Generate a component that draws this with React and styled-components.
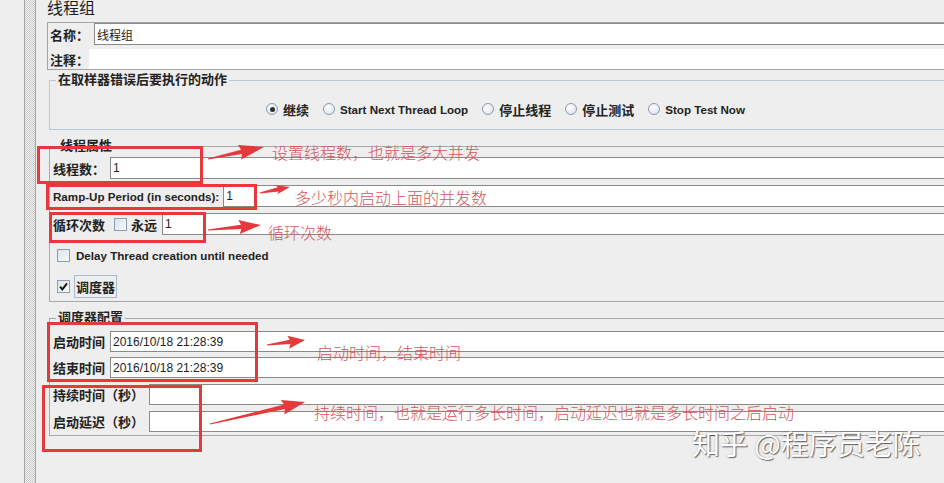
import React from "react";
import styled, { createGlobalStyle } from "styled-components";

const GlobalStyle = createGlobalStyle`
  html, body {
    margin: 0;
    padding: 0;
    background: #eeeeee;
  }
  body {
    font-family: "Liberation Sans", "Noto Sans CJK SC", sans-serif;
    color: #222;
    overflow: hidden;
  }
`;

const Page = styled.div`
  position: relative;
  display: flex;
  width: 944px;
  height: 483px;
  overflow: hidden;
  background: #eeeeee;
`;

const TreeEdge = styled.div`
  flex: none;
  width: 24px;
  border-right: 1px solid #a5a5a5;
`;

const Splitter = styled.div`
  flex: none;
  width: 10px;
  border-right: 1px solid #a5a5a5;
  background: repeating-conic-gradient(#cbcbcb 0 25%, #f3f3f3 0 50%) 0 0 / 2px 2px;
`;

const Main = styled.main`
  flex: none;
  width: 1000px;
  padding-left: 11px;
  display: flex;
  flex-direction: column;
`;

const Title = styled.h1`
  margin: -4px 0 4px;
  height: 22px;
  line-height: 22px;
  font-family: "Noto Sans CJK SC", sans-serif;
  font-size: 16px;
  font-weight: 400;
  color: #1e1e1e;
`;

const NameBox = styled.div`
  display: flex;
  flex-direction: column;
  gap: 4px;
  padding-left: 2px;
  border: 1px solid #a3a3a3;
  border-right: none;
`;

const Group = styled.fieldset`
  margin: ${(p) => p.$mt}px 0 0 2px;
  padding: 0 0 ${(p) => p.$pb}px 3px;
  border: 1px solid ${(p) => p.$tone};
  border-right: none;
  min-width: 0;
  display: flex;
  flex-direction: column;
`;

const Legend = styled.legend`
  margin-left: ${(p) => p.$ml}px;
  padding: 0 2px;
  height: 16px;
  line-height: 16px;
  font-size: 13px;
  font-weight: 700;
  color: #222;
`;

const Row = styled.div`
  display: flex;
  align-items: center;
  height: ${(p) => p.$h}px;
  margin-top: ${(p) => p.$mt || 0}px;
  gap: ${(p) => p.$gap ?? 5}px;
`;

const Label = styled.span`
  flex: none;
  width: ${(p) => (p.$w ? `${p.$w}px` : "auto")};
  font-size: ${(p) => (p.$en ? 11.6 : 13)}px;
  font-weight: 700;
  white-space: nowrap;
  color: #222;
`;

const Field = styled.div`
  flex: 1;
  align-self: stretch;
  display: flex;
  align-items: center;
  padding-left: 2px;
  background: #fff;
  border: 1px solid ${(p) => (p.$plain ? "#fff" : "#8a8a8a")};
  border-right: none;
  font-size: 12px;
  color: #222;
`;

const RadioRow = styled.div`
  display: flex;
  align-items: center;
  gap: 14px;
  height: 16px;
  margin-top: 13px;
  padding-left: 213px;
`;

const Choice = styled.label`
  display: flex;
  align-items: center;
  gap: 5px;
  font-size: ${(p) => (p.$en ? 11.6 : 13)}px;
  font-weight: 700;
  white-space: nowrap;
  color: #222;
`;

const RadioDot = styled.span`
  flex: none;
  width: 12px;
  height: 12px;
  box-sizing: border-box;
  border-radius: 50%;
  border: 1px solid #8b9bb0;
  background: radial-gradient(circle at 40% 35%, #ffffff 0, #e6eaef 65%, #cfd6df 100%);
  display: inline-flex;
  align-items: center;
  justify-content: center;

  &::after {
    content: "";
    width: 5px;
    height: 5px;
    border-radius: 50%;
    background: ${(p) => (p.$on ? "#2e2e2e" : "transparent")};
  }
`;

const CheckBox = styled.span`
  flex: none;
  width: 13px;
  height: 13px;
  box-sizing: border-box;
  border: 1px solid #8d9db2;
  background: linear-gradient(135deg, #dbe3ec, #f8fafc);
  display: inline-flex;
  align-items: center;
  justify-content: center;
`;

const CheckRow = styled.div`
  display: flex;
  align-items: center;
  gap: 4px;
  height: ${(p) => p.$h}px;
  margin-top: ${(p) => p.$mt}px;
  padding-left: 4px;
`;

const CheckText = styled.span`
  font-size: ${(p) => (p.$en ? 11.6 : 13)}px;
  font-weight: 700;
  white-space: nowrap;
  color: #222;
  padding: 1px 1px;
  border: 1px solid ${(p) => (p.$focus ? "#a9b9cc" : "transparent")};
`;

const Overlay = styled.div`
  position: absolute;
  inset: 0;
  pointer-events: none;
`;

const RedBox = styled.div`
  position: absolute;
  left: ${(p) => p.$x}px;
  top: ${(p) => p.$y}px;
  width: ${(p) => p.$w}px;
  height: ${(p) => p.$h}px;
  box-sizing: border-box;
  border: 3px solid #e6393c;
`;

const Note = styled.div`
  position: absolute;
  left: ${(p) => p.$x}px;
  top: ${(p) => p.$y - 10}px;
  height: 20px;
  line-height: 20px;
  font-family: "Noto Sans CJK SC", sans-serif;
  font-size: 16px;
  font-weight: 300;
  color: #d4555b;
  white-space: nowrap;
`;

const ArrowLayer = styled.svg`
  position: absolute;
  left: 0;
  top: 0;
`;

const Watermark = styled.div`
  position: absolute;
  left: 692px;
  top: 427px;
  height: 32px;
  line-height: 32px;
  font-family: "Noto Sans CJK SC", sans-serif;
  font-size: 28px;
  color: #ffffff;
  white-space: nowrap;
  text-shadow: 1px 1px 1px rgba(60, 60, 60, 0.75), 0 0 2px rgba(0, 0, 0, 0.25);
`;

const arrowPoints = ([x1, y1, x2, y2, head, wing]) => {
  const dx = x2 - x1;
  const dy = y2 - y1;
  const len = Math.hypot(dx, dy);
  const ux = dx / len;
  const uy = dy / len;
  const nx = -uy;
  const ny = ux;
  const bx = x2 - ux * head;
  const by = y2 - uy * head;
  const shaft = 2.2;
  return [
    [x1 + nx * 0.6, y1 + ny * 0.6],
    [bx + nx * shaft, by + ny * shaft],
    [bx + nx * wing - ux * 2, by + ny * wing - uy * 2],
    [x2, y2],
    [bx - nx * wing - ux * 2, by - ny * wing - uy * 2],
    [bx - nx * shaft, by - ny * shaft],
    [x1 - nx * 0.6, y1 - ny * 0.6],
  ]
    .map((p) => p.map((v) => v.toFixed(1)).join(","))
    .join(" ");
};

const arrows = [
  [208, 159, 264, 147, 23, 7.5],
  [260, 193, 290, 187, 12, 4.5],
  [208, 230, 261, 225, 20, 7],
  [267, 345, 305, 340, 15, 6.5],
  [210, 424, 305, 402, 21, 7.5],
];

const boxes = [
  { x: 37, y: 146, w: 166, h: 38 },
  { x: 46, y: 184, w: 211, h: 26 },
  { x: 49, y: 212, w: 157, h: 31 },
  { x: 47, y: 322, w: 211, h: 60 },
  { x: 42, y: 385, w: 160, h: 67 },
];

const notes = [
  { x: 272, y: 152, text: "设置线程数，也就是多大并发" },
  { x: 295, y: 197, text: "多少秒内启动上面的并发数" },
  { x: 268, y: 232, text: "循环次数" },
  { x: 317, y: 352, text: "启动时间，结束时间" },
  { x: 314, y: 412, text: "持续时间，也就是运行多长时间，启动延迟也就是多长时间之后启动" },
];

const radios = [
  { text: "继续", on: true },
  { text: "Start Next Thread Loop", en: true },
  { text: "停止线程" },
  { text: "停止测试" },
  { text: "Stop Test Now", en: true },
];

const Tick = () => (
  <svg width="9" height="9" viewBox="0 0 9 9">
    <path d="M1 4.6 L3.4 7.4 L8 1.4" fill="none" stroke="#151515" strokeWidth="1.9" />
  </svg>
);

const App = () => {
  return (
    <>
      <GlobalStyle />
      <Page>
        <TreeEdge />
        <Splitter />
        <Main>
          <Title>线程组</Title>

          <NameBox>
            <Row $h={22} $gap={0}>
              <Label $w={44}>名称：</Label>
              <Field>线程组</Field>
            </Row>
            <Row $h={20} $gap={0}>
              <Label $w={39}>注释：</Label>
              <Field $plain />
            </Row>
          </NameBox>

          <Group $mt={2} $pb={12} $tone="#b9c7d6">
            <Legend $ml={3}>在取样器错误后要执行的动作</Legend>
            <RadioRow>
              {radios.map((r) => (
                <Choice key={r.text} $en={r.en}>
                  <RadioDot $on={r.on} />
                  {r.text}
                </Choice>
              ))}
            </RadioRow>
          </Group>

          <Group $mt={8} $pb={5} $tone="#a8a8a8">
            <Legend $ml={5}>线程属性</Legend>
            <Row $h={22} $mt={3}>
              <Label>线程数：</Label>
              <Field>1</Field>
            </Row>
            <Row $h={22} $mt={6} $gap={4}>
              <Label $en>Ramp-Up Period (in seconds):</Label>
              <Field>1</Field>
            </Row>
            <Row $h={22} $mt={6}>
              <Label>循环次数</Label>
              <Row $h={22} $gap={4}>
                <span />
                <CheckBox />
                <Label>永远</Label>
              </Row>
              <Field>1</Field>
            </Row>
            <CheckRow $h={16} $mt={12}>
              <CheckBox />
              <CheckText $en>Delay Thread creation until needed</CheckText>
            </CheckRow>
            <CheckRow $h={19} $mt={14}>
              <CheckBox>
                <Tick />
              </CheckBox>
              <CheckText $focus>调度器</CheckText>
            </CheckRow>
          </Group>

          <Group $mt={8} $pb={3} $tone="#a8a8a8">
            <Legend $ml={3}>调度器配置</Legend>
            <Row $h={21} $mt={5}>
              <Label>启动时间</Label>
              <Field>2016/10/18 21:28:39</Field>
            </Row>
            <Row $h={21} $mt={5}>
              <Label>结束时间</Label>
              <Field>2016/10/18 21:28:39</Field>
            </Row>
            <Row $h={21} $mt={6}>
              <Label>持续时间（秒）</Label>
              <Field />
            </Row>
            <Row $h={21} $mt={6}>
              <Label>启动延迟（秒）</Label>
              <Field />
            </Row>
          </Group>
        </Main>

        <Overlay>
          {boxes.map((b, i) => (
            <RedBox key={i} $x={b.x} $y={b.y} $w={b.w} $h={b.h} />
          ))}
          <ArrowLayer width="944" height="483" viewBox="0 0 944 483">
            {arrows.map((a, i) => (
              <polygon key={i} points={arrowPoints(a)} fill="#e6393c" />
            ))}
          </ArrowLayer>
          {notes.map((n) => (
            <Note key={n.text} $x={n.x} $y={n.y}>
              {n.text}
            </Note>
          ))}
          <Watermark>知乎 @程序员老陈</Watermark>
        </Overlay>
      </Page>
    </>
  );
};

export default App;
